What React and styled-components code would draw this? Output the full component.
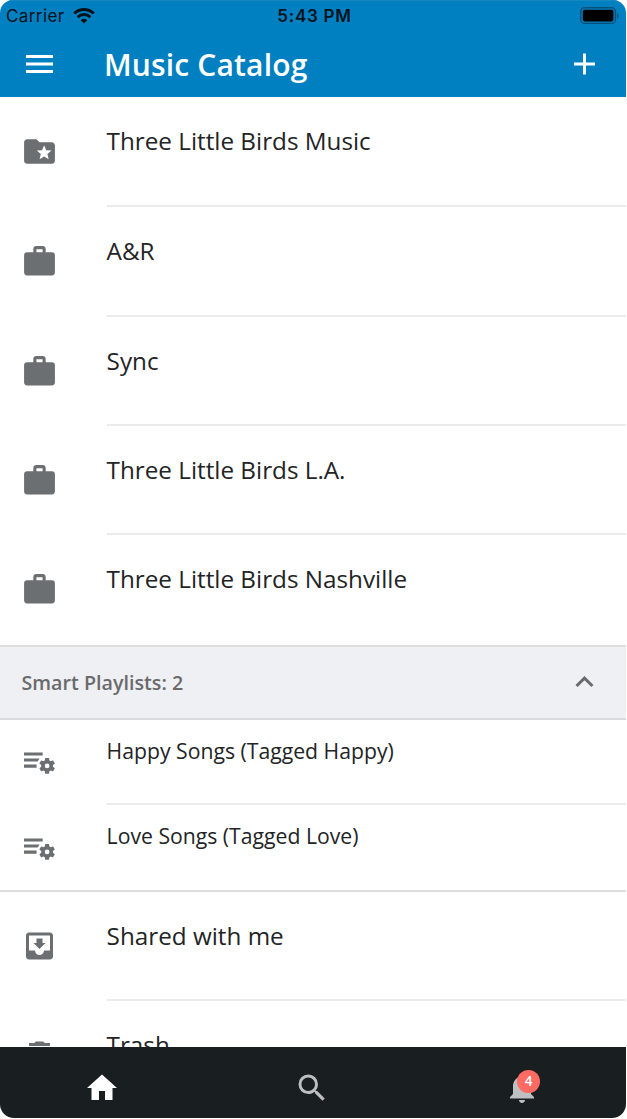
import React from "react";
import styled, { createGlobalStyle } from "styled-components";

const Global = createGlobalStyle`
  * { box-sizing: border-box; }
  body { margin: 0; background: #fff; }
`;

const Phone = styled.div`
  width: 626px;
  height: 1118px;
  display: flex;
  flex-direction: column;
  overflow: hidden;
  border-radius: 13px 13px 14px 14px;
  background: #fff;
  color: #222426;
  font-family: "Open Sans", "Noto Sans", sans-serif;
`;

const Header = styled.header`
  flex: none;
  height: 97px;
  background: #0080c1;
  border-top: 1px solid #1787c0;
`;

const StatusBar = styled.div`
  height: 30px;
  display: grid;
  grid-template-columns: 1fr auto 1fr;
  align-items: center;
  padding: 0 6px;
  color: #06121b;
  font-family: Inter, "Liberation Sans", sans-serif;
  font-size: 17px;
`;

const Carrier = styled.div`
  display: flex;
  align-items: center;
  gap: 8px;
  letter-spacing: 0.4px;
`;

const Clock = styled.div`
  font-weight: 600;
  letter-spacing: 0.75px;
  padding-left: 3px;
`;

const BatterySlot = styled.div`
  display: flex;
  justify-content: flex-end;
`;

const TitleBar = styled.div`
  height: 66px;
  display: flex;
  align-items: center;
  padding: 0 24px 0 21px;
  color: #fff;
`;

const Title = styled.h1`
  flex: 1;
  margin: 1px 0 0 47px;
  font-size: 30px;
  font-weight: 600;
  letter-spacing: 0.16px;
  line-height: 40px;
`;

const Content = styled.main`
  flex: 1;
  min-height: 0;
  overflow: hidden;
`;

const Group = styled.section`
  border-bottom: ${(p) => (p.$ruled ? "2px solid #dcdddd" : "none")};
`;

const Row = styled.div`
  height: ${(p) => p.$height}px;
  display: flex;
  padding-left: 21px;
  color: #6b6f71;
`;

const IconSlot = styled.div`
  width: 85.6px;
  height: 100%;
  padding-top: ${(p) => p.$top}px;
`;

const RowBody = styled.div`
  flex: 1;
  padding-top: ${(p) => (p.$small ? 14.5 : 27)}px;
  border-bottom: ${(p) => (p.$last ? "none" : "2px solid #ebebec")};
  color: #222426;
  font-size: ${(p) => (p.$small ? 21.2 : 24.25)}px;
  line-height: ${(p) => (p.$small ? 33 : 34)}px;
  white-space: nowrap;
`;

const SectionHeader = styled.div`
  height: 75px;
  display: flex;
  align-items: center;
  justify-content: space-between;
  padding: 0 24px 0 21.5px;
  background: #eff0f4;
  border-top: 2px solid #dededf;
  border-bottom: 2px solid #d9dade;
  color: #6a6a6c;
  font-size: 19.7px;
  font-weight: 600;
`;

const TabBar = styled.nav`
  flex: none;
  height: 71px;
  display: flex;
  justify-content: space-between;
  padding: 23px 86px 0 84px;
  background: #191e21;
`;

const Tab = styled.div`
  position: relative;
  width: 36px;
  height: 36px;
  color: ${(p) => (p.$active ? "#fff" : "#bdbfc1")};
`;

const Badge = styled.span`
  position: absolute;
  left: 13px;
  top: 0;
  width: 23px;
  height: 23px;
  border-radius: 50%;
  background: #ff6b63;
  color: #fff;
  font-size: 13.5px;
  font-weight: 600;
  line-height: 22px;
  text-align: center;
`;

const Svg = styled.svg`
  display: block;
  flex: none;
  fill: currentColor;
`;

const paths = {
  menu: "M3 18h18v-2H3v2zm0-5h18v-2H3v2zm0-7v2h18V6H3z",
  add: "M19 13h-6v6h-2v-6H5v-2h6V5h2v6h6v2z",
  folder:
    "M20 6h-8l-2-2H4c-1.1 0-1.99.9-1.99 2L2 18c0 1.1.9 2 2 2h16c1.1 0 2-.9 2-2V8c0-1.1-.9-2-2-2zm-2.06 11L15 15.28 12.06 17l.78-3.33-2.59-2.24 3.41-.29L15 8l1.34 3.14 3.41.29-2.59 2.24.78 3.33z",
  work: "M10 2h4a2 2 0 0 1 2 2v2h4a2 2 0 0 1 2 2v11a2 2 0 0 1-2 2H4a2 2 0 0 1-2-2V8a2 2 0 0 1 2-2h4V4a2 2 0 0 1 2-2zm4 4V4h-4v2h4z",
  inbox:
    "M19 3H4.99c-1.11 0-1.98.9-1.98 2L3 19c0 1.1.88 2 1.99 2H19c1.1 0 2-.9 2-2V5c0-1.1-.9-2-2-2zm0 12h-4c0 1.66-1.35 3-3 3s-3-1.34-3-3H4.99V5H19v10zm-3-5h-2V7h-4v3H8l4 4 4-4z",
  trash: "M6 19c0 1.1.9 2 2 2h8c1.1 0 2-.9 2-2V7H6v12zM19 4h-3.5l-1-1h-5l-1 1H5v2h14V4z",
  up: "M7.41 15.41 12 10.83l4.59 4.58L18 14l-6-6-6 6z",
  home: "M10 20v-6h4v6h5v-8h3L12 3 2 12h3v8z",
  search:
    "M15.5 14h-.79l-.28-.27A6.47 6.47 0 0 0 16 9.5 6.5 6.5 0 1 0 9.5 16c1.61 0 3.09-.59 4.23-1.57l.27.28v.79l5 4.99L20.49 19l-4.99-5zm-6 0C7.01 14 5 11.99 5 9.5S7.01 5 9.5 5 14 7.01 14 9.5 11.99 14 9.5 14z",
  bell: "M12 22c1.1 0 2-.9 2-2h-4c0 1.1.89 2 2 2zm6-6v-5c0-3.07-1.64-5.64-4.5-6.32V4c0-.83-.67-1.5-1.5-1.5s-1.5.67-1.5 1.5v.68C7.63 5.36 6 7.92 6 11v5l-2 2v1h16v-1l-2-2z",
};

const Icon = ({ name, size = 36, shift = 0 }) => (
  <Svg width={size} height={size} viewBox={`${-shift} 0 24 24`}>
    <path d={paths[name]} />
  </Svg>
);

const PlaylistIcon = () => (
  <Svg width="37" height="37" viewBox="0 0 37 37">
    <path d="M3 8.4h18.7v3.1H3zM3 14.5h15.6l-2 3.1H3zM3 20.6h12.6v3.1H3z" />
    <g transform="translate(15.8 11.6) scale(.855)">
      <path d="M12 15A3 3 0 0 1 9 12 3 3 0 0 1 12 9a3 3 0 0 1 3 3 3 3 0 0 1-3 3m7.43-2.03c.04-.32.07-.64.07-.97s-.03-.66-.07-1l2.11-1.63c.19-.15.24-.42.12-.64l-2-3.46c-.12-.22-.39-.31-.61-.22l-2.49 1c-.52-.39-1.06-.73-1.69-.98l-.37-2.65A.506.506 0 0 0 14 2h-4c-.25 0-.46.18-.5.42l-.37 2.65c-.63.25-1.17.59-1.69.98l-2.49-1c-.22-.09-.49 0-.61.22l-2 3.46c-.13.22-.07.49.12.64L4.57 11c-.04.34-.07.67-.07 1s.03.65.07.97l-2.11 1.66c-.19.15-.25.42-.12.64l2 3.46c.12.22.39.3.61.22l2.49-1.01c.52.4 1.06.74 1.69.99l.37 2.65c.04.24.25.42.5.42h4c.25 0 .46-.18.5-.42l.37-2.65c.63-.26 1.17-.59 1.69-.99l2.49 1.01c.22.08.49 0 .61-.22l2-3.46c.12-.22.07-.49-.12-.64z" transform="translate(1 1) scale(.92)" />
    </g>
  </Svg>
);

const Wifi = () => (
  <Svg width="22" height="16" viewBox="0 0 22 16">
    <path d="M11 15.5 7.7 12.2a4.7 4.7 0 0 1 6.6 0z" />
    <path d="M4.7 9.2a8.9 8.9 0 0 1 12.6 0M1.2 5.5a13.9 13.9 0 0 1 19.6 0" fill="none" stroke="currentColor" strokeWidth="3" />
  </Svg>
);

const Battery = () => (
  <Svg width="40" height="18" viewBox="0 0 40 18">
    <rect x="0.8" y="0.8" width="34.6" height="15.6" rx="3.6" fill="none" stroke="#06507a" strokeWidth="1.4" />
    <rect x="2.8" y="2.8" width="30.6" height="11.6" rx="1.8" fill="#000" />
    <path d="M37 6a3 3 0 0 1 0 5.4z" fill="#06507a" />
  </Svg>
);

const folders = [
  ["Three Little Birds Music", "folder", 109.7],
  ["A&R", "work", 109.85],
  ["Sync", "work", 109.45],
  ["Three Little Birds L.A.", "work", 109.45],
  ["Three Little Birds Nashville", "work", 109.55],
];

export default function App() {
  return (
    <Phone>
      <Global />
      <Header>
        <StatusBar>
          <Carrier>
            Carrier
            <Wifi />
          </Carrier>
          <Clock>5:43 PM</Clock>
          <BatterySlot>
            <Battery />
          </BatterySlot>
        </StatusBar>
        <TitleBar>
          <Icon name="menu" shift={0.33} />
          <Title>Music Catalog</Title>
          <Icon name="add" shift={0.33} />
        </TitleBar>
      </Header>
      <Content>
        <Group>
          {folders.map(([label, icon, height], i) => (
            <Row key={label} $height={height}>
              <IconSlot $top={36}>
                <Icon name={icon} size={37} />
              </IconSlot>
              <RowBody $last={i === folders.length - 1}>{label}</RowBody>
            </Row>
          ))}
        </Group>
        <Group $ruled>
          <SectionHeader>
            Smart Playlists: 2
            <Icon name="up" shift={0.33} />
          </SectionHeader>
          <Row $height={85}>
            <IconSlot $top={24}>
              <PlaylistIcon />
            </IconSlot>
            <RowBody $small>Happy Songs (Tagged Happy)</RowBody>
          </Row>
          <Row $height={85}>
            <IconSlot $top={25}>
              <PlaylistIcon />
            </IconSlot>
            <RowBody $small $last>
              Love Songs (Tagged Love)
            </RowBody>
          </Row>
        </Group>
        <Group>
          <Row $height={109.5}>
            <IconSlot $top={36}>
              <Icon name="inbox" shift={0.33} />
            </IconSlot>
            <RowBody>Shared with me</RowBody>
          </Row>
          <Row $height={109.5}>
            <IconSlot $top={36}>
              <Icon name="trash" shift={0.33} />
            </IconSlot>
            <RowBody $last>Trash</RowBody>
          </Row>
        </Group>
      </Content>
      <TabBar>
        <Tab $active>
          <Icon name="home" />
        </Tab>
        <Tab>
          <Icon name="search" />
        </Tab>
        <Tab>
          <Icon name="bell" />
          <Badge>4</Badge>
        </Tab>
      </TabBar>
    </Phone>
  );
}
